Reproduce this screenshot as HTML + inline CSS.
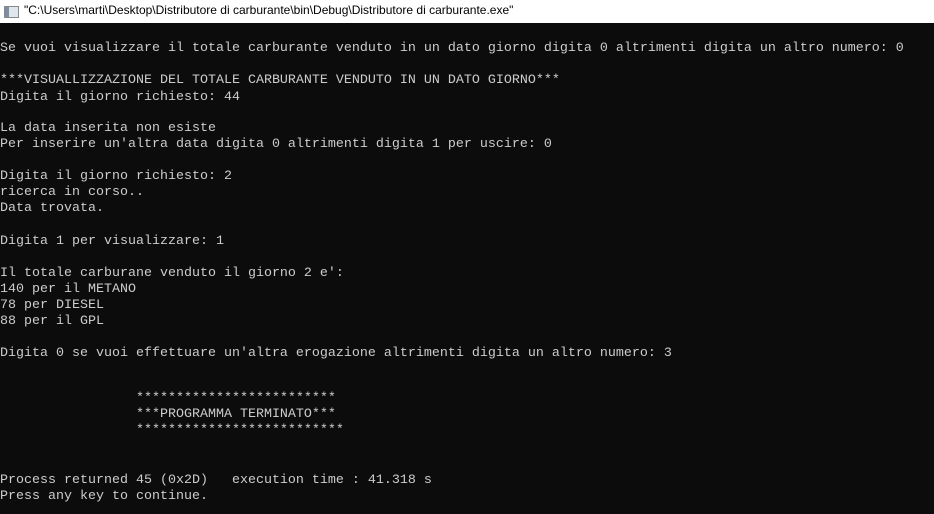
<!DOCTYPE html>
<html><head><meta charset="utf-8"><style>
html,body{margin:0;padding:0;width:934px;height:514px;overflow:hidden;background:#0c0c0c}
#tb{position:absolute;left:0;top:0;width:934px;height:23px;background:#fff;}
#tb .ic{position:absolute;left:4px;top:6px;width:13px;height:10px;border:1px solid #888;background:#dfe6ee}
#tb .ic:before{content:"";position:absolute;left:0;top:0;width:4px;height:10px;background:#7a8ea3}
#tb span{position:absolute;left:24px;top:3px;font:12px "Liberation Sans",sans-serif;color:#000;white-space:pre}
.l{position:absolute;left:0;font-family:"Liberation Mono",monospace;font-size:13.33px;line-height:16px;height:16px;color:#cccccc;white-space:pre}
</style></head><body>
<div id="tb"><div class="ic"></div><span>"C:\Users\marti\Desktop\Distributore di carburante\bin\Debug\Distributore di carburante.exe"</span></div>
<div class="l" style="top:41px">Se vuoi visualizzare il totale carburante venduto in un dato giorno digita 0 altrimenti digita un altro numero: 0</div>
<div class="l" style="top:73px">***VISUALLIZZAZIONE DEL TOTALE CARBURANTE VENDUTO IN UN DATO GIORNO***</div>
<div class="l" style="top:90px">Digita il giorno richiesto: 44</div>
<div class="l" style="top:121px">La data inserita non esiste</div>
<div class="l" style="top:137px">Per inserire un'altra data digita 0 altrimenti digita 1 per uscire: 0</div>
<div class="l" style="top:169px">Digita il giorno richiesto: 2</div>
<div class="l" style="top:185px">ricerca in corso..</div>
<div class="l" style="top:201px">Data trovata.</div>
<div class="l" style="top:234px">Digita 1 per visualizzare: 1</div>
<div class="l" style="top:266px">Il totale carburane venduto il giorno 2 e':</div>
<div class="l" style="top:282px">140 per il METANO</div>
<div class="l" style="top:298px">78 per DIESEL</div>
<div class="l" style="top:314px">88 per il GPL</div>
<div class="l" style="top:346px">Digita 0 se vuoi effettuare un'altra erogazione altrimenti digita un altro numero: 3</div>
<div class="l" style="top:391px">                 *************************</div>
<div class="l" style="top:407px">                 ***PROGRAMMA TERMINATO***</div>
<div class="l" style="top:423px">                 **************************</div>
<div class="l" style="top:473px">Process returned 45 (0x2D)   execution time : 41.318 s</div>
<div class="l" style="top:489px">Press any key to continue.</div>
</body></html>
